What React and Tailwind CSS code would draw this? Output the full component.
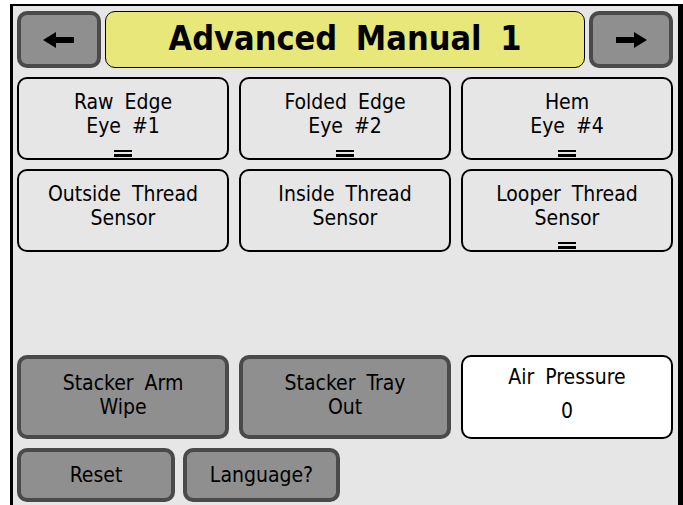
import React from 'react'

const font = { fontFamily: '"DejaVu Sans Condensed", "DejaVu Sans", sans-serif', fontStretch: 'condensed' }

function Arrow({ dir }) {
  return (
    <svg width="32" height="16" viewBox="0 0 32 16" className={dir === 'right' ? 'rotate-180' : ''}>
      <polygon points="0,8 13,0 13,5 31,5 31,11 13,11 13,16" fill="#000" />
    </svg>
  )
}

function Eq() {
  return (
    <div className="absolute bottom-[1px] left-1/2 -translate-x-1/2 flex flex-col gap-[2px]">
      <div className="w-[18px] h-[2px] bg-black" />
      <div className="w-[18px] h-[3px] bg-black" />
    </div>
  )
}

function LightBtn({ lines, eq }) {
  return (
    <div className="relative h-[83px] rounded-[10px] border-2 border-black bg-[#e6e6e6] flex flex-col items-center pt-[11px] text-[21px] leading-[24px] text-black [word-spacing:5px]">
      {lines.map(l => <div key={l}>{l}</div>)}
      {eq && <Eq />}
    </div>
  )
}

function DarkBtn({ lines, className = '' }) {
  return (
    <div className={`rounded-[10px] border-4 border-[#4a4a4a] bg-[#8f8f8f] flex flex-col items-center justify-center text-[21px] leading-[24px] text-black [word-spacing:5px] ${className}`}>
      {lines.map(l => <div key={l}>{l}</div>)}
    </div>
  )
}

export default function App() {
  return (
    <div className="w-[683px] h-[505px] bg-white pl-[10px] pt-[4px] overflow-hidden" style={font}>
      <div className="h-[501px] border-l-[3px] border-t-[2px] border-r-[5px] border-black bg-[#e6e6e6] pl-[4px] pr-[5px] pt-[5px]">
        {/* header */}
        <div className="flex gap-[4px] h-[57px]">
          <div className="w-[84px] rounded-[10px] border-4 border-[#4a4a4a] bg-[#8f8f8f] flex items-center justify-center">
            <Arrow dir="left" />
          </div>
          <div className="flex-1 rounded-[10px] border border-black bg-[#e8e87a] flex items-center justify-center text-[34px] font-bold text-black [word-spacing:8px] pb-[2px]">
            Advanced Manual 1
          </div>
          <div className="w-[84px] rounded-[10px] border-4 border-[#4a4a4a] bg-[#8f8f8f] flex items-center justify-center">
            <Arrow dir="right" />
          </div>
        </div>

        {/* eyes */}
        <div className="grid grid-cols-3 gap-x-[10px] gap-y-[9px] mt-[9px]">
          <LightBtn lines={['Raw Edge', 'Eye #1']} eq />
          <LightBtn lines={['Folded Edge', 'Eye #2']} eq />
          <LightBtn lines={['Hem', 'Eye #4']} eq />
          <LightBtn lines={['Outside Thread', 'Sensor']} />
          <LightBtn lines={['Inside Thread', 'Sensor']} />
          <LightBtn lines={['Looper Thread', 'Sensor']} eq />
        </div>

        {/* controls */}
        <div className="grid grid-cols-3 gap-x-[10px] mt-[103px] h-[84px]">
          <DarkBtn lines={['Stacker Arm', 'Wipe']} className="pb-[4px]" />
          <DarkBtn lines={['Stacker Tray', 'Out']} className="pb-[4px]" />
          <div className="rounded-[10px] border-2 border-black bg-white flex flex-col items-center pt-[8px] text-[21px] leading-[24px] text-black [word-spacing:5px]">
            <div>Air Pressure</div>
            <div className="mt-[10px]">0</div>
          </div>
        </div>

        <div className="flex gap-[8px] mt-[9px] h-[54px]">
          <DarkBtn lines={['Reset']} className="w-[158px]" />
          <DarkBtn lines={['Language?']} className="w-[157px]" />
        </div>
      </div>
    </div>
  )
}
